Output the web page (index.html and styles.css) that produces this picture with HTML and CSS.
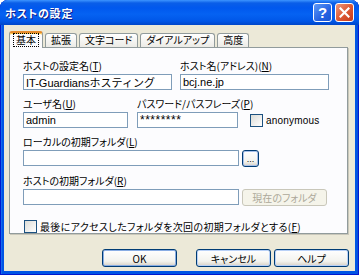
FILE: index.html
```html
<!doctype html>
<html lang="ja">
<head>
    <meta charset="UTF-8">
    <title>ホストの設定</title>
    <link rel="stylesheet" href="styles.css">
</head>
<body>
    <div class="window">
        <div class="titlebar">
            <span class="title">ホストの設定</span>
            <span class="tb-btn help">?</span>
            <span class="tb-btn close">
                <svg width="11" height="11" viewBox="0 0 11 11"><path d="M1.5 1.5 L9.5 9.5 M9.5 1.5 L1.5 9.5" stroke="#fff" stroke-width="2.2" stroke-linecap="square"/></svg>
            </span>
        </div>
        <div class="client">
            <div class="tabs">
                <div class="tab active"><span class="focus">基本</span></div>
                <div class="tab">拡張</div>
                <div class="tab">文字コード</div>
                <div class="tab">ダイアルアップ</div>
                <div class="tab">高度</div>
            </div>
            <div class="panel">
                <div class="row">
                    <div class="field w-name">
                        <label>ホストの設定名(<u>T</u>)</label>
                        <input class="input" type="text" value="IT-Guardiansホスティング" readonly>
                    </div>
                    <div class="field w-name">
                        <label>ホスト名(アドレス)(<u>N</u>)</label>
                        <input class="input" type="text" value="bcj.ne.jp" readonly>
                    </div>
                </div>
                <div class="row row-user">
                    <div class="field w-user">
                        <label>ユーザ名(<u>U</u>)</label>
                        <input class="input" type="text" value="admin" readonly>
                    </div>
                    <div class="field w-pass">
                        <label>パスワード/パスフレーズ(<u>P</u>)</label>
                        <input class="input pass" type="text" value="********" readonly>
                    </div>
                    <div class="check-line anon">
                        <span class="check"></span>
                        <span class="anon-text">anonymous</span>
                    </div>
                </div>
                <div class="row-block">
                    <label>ローカルの初期フォルダ(<u>L</u>)</label>
                    <div class="line">
                        <input class="input w-path" type="text" value="" readonly>
                        <button class="btn btn-small">...</button>
                    </div>
                </div>
                <div class="row-block">
                    <label>ホストの初期フォルダ(<u>R</u>)</label>
                    <div class="line">
                        <input class="input w-path" type="text" value="" readonly>
                        <button class="btn btn-disabled">現在のフォルダ</button>
                    </div>
                </div>
                <div class="check-line last">
                    <span class="check"></span>
                    <span class="last-text">最後にアクセスしたフォルダを次回の初期フォルダとする(<u>F</u>)</span>
                </div>
            </div>
            <div class="actions">
                <button class="btn btn-main btn-default">OK</button>
                <button class="btn btn-main btn-cancel">キャンセル</button>
                <button class="btn btn-main btn-help">ヘルプ</button>
            </div>
        </div>
    </div>
</body>
</html>
```

FILE: styles.css
```css
* {
    box-sizing: border-box;
}

body {
    margin: 0;
    background: #ffffff;
    font-family: "Noto Sans CJK JP", sans-serif;
    font-size: 10px;
    font-feature-settings: "palt";
    color: #000000;
}

.window {
    width: 359px;
    height: 275px;
    display: flex;
    flex-direction: column;
    background: #0055e5;
    border-radius: 8px 8px 0 0;
    overflow: hidden;
    box-shadow: inset 1px 0 #0019cf, inset -1px 0 #0019cf, inset 0 -1px #0019cf, inset 2px 0 #166aee, inset -2px 0 #0a4fd8;
}

.titlebar {
    height: 25px;
    display: flex;
    align-items: center;
    padding: 0 5px 0 5px;
    background: linear-gradient(to bottom, #3d95ff 0, #0a5ee8 3px, #0058ee 8px, #0562f2 14px, #0057e8 21px, #0046c8 25px);
}

.title {
    flex: 1;
    color: #ffffff;
    font-size: 11px;
    font-weight: bold;
    letter-spacing: 0.8px;
    text-shadow: 1px 1px #0f1a8a;
}

.tb-btn {
    width: 19px;
    height: 19px;
    border: 1px solid #ffffff;
    border-radius: 3px;
    display: flex;
    align-items: center;
    justify-content: center;
}

.help {
    background: linear-gradient(135deg, #5d9af8, #2663e2 60%, #1a55d4);
    color: #ffffff;
    font-family: "Liberation Sans", sans-serif;
    font-size: 15px;
    font-weight: bold;
}

.close {
    margin-left: 3px;
    background: linear-gradient(135deg, #ec9a80, #dd5a36 50%, #c6391a);
}

.client {
    flex: 1;
    margin: 0 4px 4px;
    padding: 6px 0 0 5px;
    background: #ece9d8;
}

.tabs {
    height: 16px;
    display: flex;
    align-items: flex-end;
    position: relative;
    z-index: 1;
}

.tab {
    height: 14px;
    padding: 0 5px;
    margin-right: 2px;
    border: 1px solid #919b9c;
    border-bottom: none;
    border-radius: 3px 3px 0 0;
    background: linear-gradient(#ffffff, #ecebe6);
    line-height: 12px;
    white-space: nowrap;
}

.tab.active {
    height: 17px;
    margin-bottom: -1px;
    padding: 0 4px;
    background: #fcfcfe;
    border-top: 2px solid #e68b2c;
    box-shadow: inset 0 1px #ffc73c;
    line-height: 13px;
}

.focus {
    display: inline-block;
    padding: 0 2px;
    outline: 1px dotted #000000;
    line-height: 12px;
}

.panel {
    width: 339px;
    height: 187px;
    padding: 11px 0 0 13px;
    border: 1px solid #919b9c;
    background: #fcfcfe;
    box-shadow: 1px 1px 0 #c9c7ba;
}

label {
    display: block;
    height: 14px;
    line-height: 14px;
    margin-bottom: 1px;
    white-space: nowrap;
}

.row {
    display: flex;
    gap: 8px;
}

.row-user {
    gap: 9px;
    align-items: flex-end;
}

.row + .row,
.row-block {
    margin-top: 7px;
}

.w-name {
    width: 149px;
}

.w-user {
    width: 105px;
}

.w-pass {
    width: 101px;
}

.input {
    display: block;
    width: 100%;
    height: 16px;
    margin: 0;
    padding: 0 2px;
    border: 1px solid #7f9db9;
    border-radius: 0;
    background: #ffffff;
    font-family: "Liberation Sans", "Noto Sans CJK JP", sans-serif;
    font-size: 11px;
    color: #000000;
    outline: none;
}

.input.w-path {
    width: 216px;
}

.pass {
    font-size: 12px;
    letter-spacing: 0.5px;
}

.line {
    display: flex;
    gap: 3px;
}

.check-line {
    display: flex;
    align-items: center;
    gap: 3px;
    white-space: nowrap;
}

.check {
    width: 13px;
    height: 13px;
    border: 1px solid #1c5180;
    background: linear-gradient(135deg, #dcdcd7, #ffffff);
}

.anon {
    margin-left: 3px;
    margin-bottom: 1px;
}

.anon-text {
    font-family: "Liberation Sans", sans-serif;
    font-size: 10px;
    letter-spacing: 0.2px;
}

.last {
    margin-top: 13px;
    margin-left: 1px;
}

.last-text {
    letter-spacing: 0.35px;
}

.btn {
    margin: 0;
    padding: 0;
    border: 1px solid #003c74;
    border-radius: 3px;
    background: linear-gradient(#ffffff, #f3f3ee 70%, #d6d0c5);
    font-family: "Noto Sans CJK JP", sans-serif;
    font-size: 10px;
    font-feature-settings: "palt";
    color: #000000;
    white-space: nowrap;
}

.btn-small {
    width: 17px;
    height: 17px;
    line-height: 10px;
    box-shadow: inset 0 0 0 1px #a8c0ea;
    font-family: "Liberation Sans", sans-serif;
    font-size: 9px;
}

.btn-disabled {
    width: 85px;
    height: 17px;
    border-color: #c9c7ba;
    background: #f5f4ea;
    color: #aca899;
}

.actions {
    display: flex;
    margin-top: 15px;
    padding-left: 93px;
}

.btn-main {
    width: 75px;
    height: 18px;
    box-shadow: inset 0 0 0 1px #b9d1f7;
}

.btn-default {
    box-shadow: inset 0 0 0 1px #89ade4;
}

.btn-cancel {
    margin-left: 19px;
}

.btn-help {
    margin-left: 3px;
}
```
